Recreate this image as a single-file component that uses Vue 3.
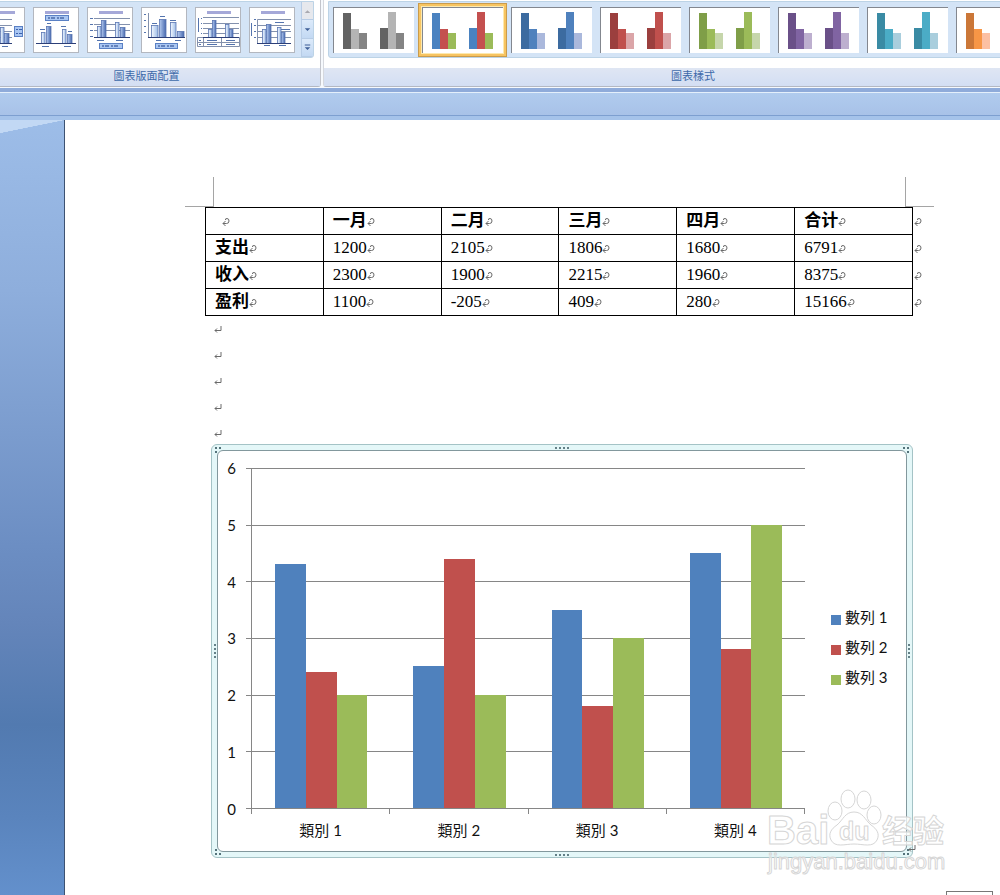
<script setup>
import { ref } from 'vue'

const ticks = [6, 5, 4, 3, 2, 1, 0]
const series = [
  { name: '數列 1', color: '#4f81bd' },
  { name: '數列 2', color: '#c0504d' },
  { name: '數列 3', color: '#9bbb59' },
]
const categories = [
  { name: '類別 1', values: [4.3, 2.4, 2] },
  { name: '類別 2', values: [2.5, 4.4, 2] },
  { name: '類別 3', values: [3.5, 1.8, 3] },
  { name: '類別 4', values: [4.5, 2.8, 5] },
]

const months = ['一月', '二月', '三月', '四月', '合计']
const rows = [
  { name: '支出', cells: ['1200', '2105', '1806', '1680', '6791'] },
  { name: '收入', cells: ['2300', '1900', '2215', '1960', '8375'] },
  { name: '盈利', cells: ['1100', '-205', '409', '280', '15166'] },
]

// end-of-cell mark
const cellMark = 'M3.5 4L1 6.5 3.5 9M1 6.5h3.5q2.5 0 2.5-2.5t-2-2.5-1.5 1.5'

const selected = ref(1)
// fills for the six bars of every chart style
const styles = [
  ['#636363', '#b4b4b4', '#848484', '#636363', '#b4b4b4', '#848484'],
  ['#4a82c0', '#c4504f', '#9bbb59', '#4a82c0', '#c4504f', '#9bbb59'],
  ['#3c6ba0', '#4f81bd', '#aab8dc', '#3c6ba0', '#4f81bd', '#aab8dc'],
  ['#9b3f3e', '#c0504d', '#dba5a8', '#9b3f3e', '#c0504d', '#dba5a8'],
  ['#7f9e48', '#9bbb59', '#c6d6ab', '#7f9e48', '#9bbb59', '#c6d6ab'],
  ['#6a5088', '#8064a2', '#bdafcf', '#6a5088', '#8064a2', '#bdafcf'],
  ['#3a8ba4', '#4bacc6', '#a9cedd', '#3a8ba4', '#4bacc6', '#a9cedd'],
  ['#cb7738', '#f79646', '#fcc0a3', '#cb7738', '#f79646', '#fcc0a3'],
]
const styleBars = [
  [10, 6], [18, 22], [26, 26],
  [47, 21], [55, 5], [63, 26],
]

// bars: [x, y, width, dark], lines: path of the grid, legend: [x, y, w, h]
const layouts = [
  {
    title: true, base: 36, from: 3, to: 33,
    bars: [[6, 24, 4], [10, 18, 5, 1], [21, 20, 4], [25, 26, 5, 1]],
    lines: 'M3 12.5H33M3 18.5H33M3 24.5H33M3 30.5H33',
    marks: 'M7 39.5H14M23 39.5H29', legend: [35, 19, 9, 11],
  },
  {
    title: true, base: 36, from: 3, to: 43,
    bars: [[8, 25, 4], [13, 19, 5, 1], [29, 22, 4], [34, 27, 5, 1]],
    lines: '', marks: 'M9 39.5H16M31 39.5H38M7 22.5H12M14 16.5H18M28 19.5H33M35 24.5H39',
    legend: [12, 8, 24, 6],
  },
  {
    title: true, base: 30, from: 7, to: 43,
    bars: [[10, 19, 4], [14, 13, 5, 1], [28, 15, 4], [33, 20, 5, 1]],
    lines: 'M7 11.5H43M7 17.5H43M7 23.5H43',
    marks: 'M3 11.5H6M3 17.5H6M3 23.5H6M3 29.5H6M10 33.5H17M29 33.5H36', legend: [12, 36, 24, 6],
  },
  {
    title: false, base: 30, from: 7, to: 44,
    bars: [[10, 18, 7], [18, 12, 7, 1], [29, 15, 6], [36, 24, 7, 1]],
    lines: 'M7.5 6V30',
    marks: 'M3 7.5H5M3 13.5H5M3 19.5H5M3 25.5H5M15 33.5H20M34 33.5H40M11 16.5H16M19 9.5H24M29 13.5H35',
    legend: [14, 36, 23, 6],
  },
  {
    title: true, base: 30, from: 8, to: 44,
    bars: [[13, 22, 4], [17, 13, 4, 1], [30, 17, 4], [34, 22, 4, 1]],
    lines: 'M8 10.5H44M8 16.5H44M8 21.5H44M8 26.5H44M2.5 30.5H44.5V39.5H2.5ZM2 35.5H44M8.5 30V39M26.5 30V39',
    marks: 'M3.5 11V25M6 11.5H7M6 16.5H7M6 21.5H7M6 26.5H7M12 33.5H22M31 33.5H40M12 37.5H22M31 37.5H40M4 33.5H6M4 37.5H6',
  },
  {
    title: true, base: 36, from: 8, to: 42,
    bars: [[13, 22, 4], [17, 17, 5, 1], [28, 20, 4], [32, 25, 4, 1]],
    lines: 'M8.5 36V12.5H42M8 18.5H42M8 24.5H42M8 30.5H42',
    marks: 'M2.5 16V29M5 12.5H7M5 18.5H7M5 24.5H7M5 30.5H7M15 38.5H21M30 38.5H37M26 15.5H35M32 22.5H41',
  },
]
</script>

<template>
  <div class="word">
    <header class="ribbon">
      <section class="group layouts-group">
        <div class="gallery layouts">
          <button v-for="(l, i) in layouts" :key="i" class="layout" type="button">
            <svg viewBox="1 1 44 44">
              <defs>
                <linearGradient :id="'light' + i"><stop stop-color="#f4f9ff" /><stop offset="1" stop-color="#9dbbe6" /></linearGradient>
                <linearGradient :id="'dark' + i"><stop stop-color="#b4caef" /><stop offset="1" stop-color="#4668ae" /></linearGradient>
              </defs>
              <rect v-if="l.title" x="12" y="4" width="24" height="3" fill="#a5a8d8" />
              <path :d="l.lines" stroke="#8391ad" fill="none" />
              <rect
                v-for="(b, n) in l.bars"
                :key="n"
                :x="b[0] + 0.5"
                :y="b[1] + 0.5"
                :width="b[2] - 0.5"
                :height="l.base - b[1]"
                :fill="`url(#${b[3] ? 'dark' : 'light'}${i})`"
                stroke="#5a76b2"
                stroke-width="0.8"
              />
              <path :d="`M${l.from} ${l.base + 0.5}H${l.to}`" stroke="#2c3f78" />
              <path :d="l.marks" stroke="#5474ae" />
              <template v-if="l.legend">
                <rect :x="l.legend[0] + 0.5" :y="l.legend[1] + 0.5" :width="l.legend[2] - 1" :height="l.legend[3] - 1" fill="#a9c6f2" stroke="#5a80c4" />
                <path v-if="l.legend[2] > 10" :d="`M${l.legend[0] + 3} ${l.legend[1] + 3}h${l.legend[2] - 6}`" stroke="#1f3f86" stroke-dasharray="2 1 4 2" />
                <path v-else d="M37 22.5h2m1 0h3M37 26.5h2m1 0h3" stroke="#3d62ad" />
              </template>
            </svg>
          </button>
          <div class="scroller">
            <button type="button" disabled aria-label="向上"><svg viewBox="0 0 12 18"><path d="M3 12h6l-3-3z" fill="#a9a9b0" /></svg></button>
            <button type="button" aria-label="向下"><svg viewBox="0 0 12 18"><path d="M3 8h6l-3 3z" fill="#3f5f97" /></svg></button>
            <button type="button" aria-label="其他"><svg viewBox="0 0 12 18"><path d="M3 6h6v1H3zM3 9h6l-3 3z" fill="#3f5f97" /></svg></button>
          </div>
        </div>
        <h2>圖表版面配置</h2>
      </section>
      <section class="group styles-group">
        <div class="gallery styles">
          <button
            v-for="(colors, i) in styles"
            :key="i"
            class="style"
            :class="{ selected: selected === i }"
            type="button"
            @click="selected = i"
          >
            <svg viewBox="1 1 80 45">
              <rect v-for="(b, n) in styleBars" :key="n" :x="b[0]" :y="b[1]" width="8" :height="42 - b[1]" :fill="colors[n]" />
            </svg>
          </button>
        </div>
        <h2>圖表樣式</h2>
      </section>
    </header>

    <div class="band"></div>

    <main class="workspace">
      <aside class="backdrop"></aside>
      <article class="page">
        <div class="crop-marks"><i class="corner-left"></i><i class="corner-right"></i></div>

        <table class="data">
          <thead>
            <tr>
              <th class="blank"><svg class="mark" viewBox="0 0 8 10"><path :d="cellMark" /></svg></th>
              <th v-for="m in months" :key="m">{{ m }}<svg class="mark" viewBox="0 0 8 10"><path :d="cellMark" /></svg></th>
              <td class="row-end"><svg class="mark" viewBox="0 0 8 10"><path :d="cellMark" /></svg></td>
            </tr>
          </thead>
          <tbody>
            <tr v-for="r in rows" :key="r.name">
              <th>{{ r.name }}<svg class="mark" viewBox="0 0 8 10"><path :d="cellMark" /></svg></th>
              <td v-for="(c, i) in r.cells" :key="i">{{ c }}<svg class="mark" viewBox="0 0 8 10"><path :d="cellMark" /></svg></td>
              <td class="row-end"><svg class="mark" viewBox="0 0 8 10"><path :d="cellMark" /></svg></td>
            </tr>
          </tbody>
        </table>

        <p v-for="n in 5" :key="n" class="empty-line">
          <svg class="mark" viewBox="0 0 8 10"><path d="M3 4.5L1 6.5l2 2M1 6.5h6V2" /></svg>
        </p>

        <div class="frame">
          <figure class="chart">
            <div class="y-axis">
              <span v-for="t in ticks" :key="t">{{ t }}</span>
            </div>
            <div class="plot">
              <div class="grid"><i v-for="n in 6" :key="n"></i></div>
              <div class="bars">
                <div v-for="c in categories" :key="c.name" class="cluster">
                  <div
                    v-for="(v, i) in c.values"
                    :key="i"
                    class="bar"
                    :style="{ height: (v / 6) * 100 + '%', background: series[i].color }"
                  ></div>
                </div>
              </div>
            </div>
            <ul class="legend">
              <li v-for="s in series" :key="s.name"><i :style="{ background: s.color }"></i>{{ s.name }}</li>
            </ul>
            <div class="x-axis">
              <span v-for="c in categories" :key="c.name">{{ c.name }}</span>
            </div>
          </figure>

          <i class="grip top"></i>
          <i class="grip bottom"></i>
          <i class="grip left"></i>
          <i class="grip right"></i>
          <i class="corner nw"></i>
          <i class="corner ne"></i>
          <i class="corner sw"></i>
          <i class="corner se"></i>

          <svg class="frame-mark mark" viewBox="0 0 8 10"><path d="M3 4.5L1 6.5l2 2M1 6.5h6V2" /></svg>

          <svg class="watermark" viewBox="0 0 182 88">
            <g fill="#fff" fill-opacity="0.75" stroke="#d6d6d6" stroke-linejoin="round">
              <text x="1" y="56" font-size="40" font-weight="700">Bai</text>
              <path d="M88 24c-9 0-11 8-17 13-6 4-9 9-6 15 4 8 14 4 23 4s19 4 23-4c3-6 0-11-6-15-6-5-8-13-17-13z" />
              <ellipse cx="69" cy="23" rx="7" ry="9" />
              <ellipse cx="82" cy="11" rx="7" ry="9" />
              <ellipse cx="98" cy="12" rx="7" ry="9" />
              <ellipse cx="108" cy="27" rx="7" ry="9" />
              <text x="73" y="52" font-size="25" font-weight="700">du</text>
              <text class="cjk" x="116" y="54" font-size="31" font-weight="700">经验</text>
              <text x="2" y="81" font-size="22">jingyan.baidu.com</text>
            </g>
          </svg>
        </div>

        <div class="page-tip"></div>
      </article>
    </main>
  </div>
</template>

<style>
body {
  overflow: hidden;
}
</style>

<style scoped>
.word {
  display: flex;
  flex-direction: column;
  height: 100vh;
  overflow: hidden;
  background: #fff;
  font-family: "Liberation Sans", "Noto Sans CJK TC", sans-serif;
}
button {
  padding: 0;
  border: 0;
  background: none;
}
svg {
  display: block;
}

/* ribbon */
.ribbon {
  display: flex;
  flex: none;
  gap: 2px;
  height: 87px;
  padding-bottom: 1px;
  overflow: hidden;
  background: #f6f9fd;
}
.group {
  box-sizing: border-box;
  display: flex;
  flex-direction: column;
  padding-top: 1px;
  border-right: 1px solid #c3c5cc;
  border-bottom: 1px solid #b4b8c2;
  border-left: 1px solid #d5d8de;
  border-radius: 0 0 3px 3px;
  background: #fff;
}
.layouts-group {
  flex: 0 0 349px;
  margin-left: -28px;
}
.styles-group {
  flex: 1;
  margin-right: -63px;
}
.group h2 {
  margin: auto 0 0;
  height: 18px;
  background: linear-gradient(#dfe6f3, #d3def3);
  color: #3e6aaa;
  font-size: 11px;
  font-weight: 400;
  line-height: 16px;
  text-align: center;
}
.gallery {
  box-sizing: border-box;
  display: flex;
  gap: 8px;
  height: 57px;
  overflow: hidden;
  border: 1px solid #bcd3e6;
  border-radius: 0 0 3px 3px;
  background: #d4e4f6;
}
.layouts {
  justify-content: flex-end;
  margin-right: 6px;
}
.layout {
  box-sizing: border-box;
  flex: none;
  width: 46px;
  height: 46px;
  margin-top: 5px;
  border: 1px solid #b3b7bf;
  background: #fff;
}
.scroller {
  display: flex;
  flex: none;
  flex-direction: column;
  width: 12px;
  margin-left: -2px;
}
.scroller button {
  flex: 1;
  border-bottom: 1px solid #b7cce6;
  border-left: 1px solid #b7cce6;
  background: linear-gradient(#dceafa, #c3d9f3);
}
.scroller button:disabled {
  background: #e6e8ed;
}
.styles {
  margin-left: 4px;
  padding-left: 4px;
}
.style {
  box-sizing: border-box;
  flex: none;
  width: 81px;
  height: 46px;
  margin-top: 5px;
  border-top: 1px solid #83878f;
  border-left: 1px solid #83878f;
  background: #fff;
}
.style.selected {
  box-shadow: 0 0 0 1px #fce9b0, 0 0 0 3px #f7c461, 0 0 0 4px #c99b4c;
}

.band {
  box-sizing: border-box;
  flex: none;
  height: 32px;
  border-top: 4px solid #8fabda;
  border-bottom: 4px solid #a5c3ea;
  background: linear-gradient(#e4effb 1px, #b0cbee 1px, #a8c2e8 23px, #7d9fd0 23px);
}

/* document */
.workspace {
  display: flex;
  flex: 1;
  min-height: 0;
}
.backdrop {
  box-sizing: border-box;
  flex: 0 0 65px;
  border-right: 1px solid #3d5272;
  background:
    linear-gradient(to bottom right, #c2d8f4 50%, transparent 51%) 0 0 / 100% 13px no-repeat,
    linear-gradient(#9dbde8 0, #8eaedc 22%, #6c8ec3 55%, #6485ba 65%, #527ab0 78%, #5a84bd 90%, #6390cc 100%);
}
.page {
  display: flex;
  flex: 1;
  flex-direction: column;
  min-width: 0;
  padding: 57px 66px 0 120px;
  background: #fff;
}
.crop-marks {
  display: flex;
  flex: none;
  justify-content: space-between;
  height: 30px;
}
.crop-marks i {
  box-sizing: border-box;
  width: 29px;
  border-bottom: 1px solid #a5a5a5;
}
.crop-marks .corner-left {
  border-right: 1px solid #a5a5a5;
}
.crop-marks .corner-right {
  border-left: 1px solid #a5a5a5;
}

.data {
  flex: none;
  width: calc(100% - 20px);
  margin-left: 20px;
  border-collapse: collapse;
  table-layout: fixed;
  font-family: "Liberation Serif", "Noto Sans CJK SC", serif;
  font-size: 17px;
}
.data th,
.data td {
  box-sizing: border-box;
  height: 27px;
  padding: 0 0 0 9px;
  border: 1px solid #000;
  line-height: 24px;
  text-align: left;
  white-space: nowrap;
}
.data .blank {
  padding-left: 16px;
}
.data .row-end {
  width: 21px;
  padding-left: 1px;
  border: 0;
}
.mark {
  display: inline-block;
  width: 8px;
  height: 10px;
  fill: none;
  stroke: #6a6a6a;
  vertical-align: -1px;
}
.empty-line {
  display: flex;
  flex: none;
  align-items: center;
  height: 26px;
  margin: 0 0 0 29px;
}

/* chart */
.frame {
  position: relative;
  flex: none;
  margin: -2px 21px 0 26px;
  padding: 5px;
  border: 1px solid #a4c3c6;
  border-radius: 6px;
  background: #e4f7f8;
}
.chart {
  display: grid;
  grid-template-columns: 22px minmax(0, 1fr) 75px;
  grid-template-rows: 361px auto;
  column-gap: 11px;
  margin: 0;
  padding: 7px 0 11px;
  border: 1px solid #82989d;
  border-radius: 6px;
  background: #fff;
  color: #111;
  font-family: Lato, "Noto Sans CJK TC", sans-serif;
  font-size: 15px;
  line-height: 20px;
}
.y-axis {
  display: flex;
  flex-direction: column;
  justify-content: space-between;
  padding-right: 4px;
  text-align: right;
}
.plot {
  display: grid;
  margin: 10px 15px 10px 0;
}
.grid,
.bars {
  display: flex;
  grid-area: 1 / 1;
}
.grid {
  flex-direction: column;
  margin-left: -5px;
  border-bottom: 1px solid #868686;
}
.grid i {
  flex: 1;
  border-top: 1px solid #868686;
}
.bars {
  margin-bottom: 1px;
  border-left: 1px solid #868686;
}
.cluster {
  display: flex;
  flex: 1;
  align-items: flex-end;
  padding: 0 23px;
}
.bar {
  flex: 1;
}
.x-axis {
  display: flex;
  grid-column: 2;
  margin: -10px 15px 0 0;
  border-left: 1px solid;
  border-image: linear-gradient(#868686 6px, transparent 6px) 1;
}
.x-axis span {
  flex: 1;
  padding-top: 11px;
  border-right: 1px solid;
  border-image: linear-gradient(#868686 6px, transparent 6px) 1;
  text-align: center;
}
.legend {
  display: flex;
  flex-direction: column;
  gap: 10px;
  margin: 149px 0 0;
  padding: 0;
  list-style: none;
}
.legend li {
  display: flex;
  gap: 4px;
  white-space: nowrap;
}
.legend i {
  width: 10px;
  height: 10px;
  margin-top: 8px;
}

.grip,
.corner {
  position: absolute;
}
.grip.top,
.grip.bottom {
  left: calc(50% - 7px);
  width: 15px;
  height: 2px;
  background: repeating-linear-gradient(90deg, #648087 0 2px, transparent 2px 4px);
}
.grip.top {
  top: 2px;
}
.grip.bottom {
  bottom: 1px;
}
.grip.left,
.grip.right {
  top: calc(50% - 7px);
  width: 2px;
  height: 15px;
  background: repeating-linear-gradient(#648087 0 2px, transparent 2px 4px);
}
.grip.left {
  left: 2px;
}
.grip.right {
  right: 2px;
}
.corner {
  width: 2px;
  height: 2px;
  background: #54727a;
}
.nw {
  top: 2px;
  left: 3px;
  box-shadow: 4px 0 #54727a, 0 4px #54727a;
}
.ne {
  top: 2px;
  right: 3px;
  box-shadow: -4px 0 #54727a, 0 4px #54727a;
}
.sw {
  bottom: 2px;
  left: 3px;
  box-shadow: 4px 0 #54727a, 0 -4px #54727a;
}
.se {
  right: 3px;
  bottom: 2px;
  box-shadow: -4px 0 #54727a, 0 -4px #54727a;
}
.frame-mark {
  position: absolute;
  right: -4px;
  bottom: 4px;
}
.watermark {
  position: absolute;
  right: -36px;
  bottom: -19px;
  width: 182px;
  height: 88px;
  overflow: visible;
  font-family: "Liberation Sans", sans-serif;
}
.watermark .cjk {
  font-family: "Noto Sans CJK SC", sans-serif;
}
.page-tip {
  box-sizing: border-box;
  flex: none;
  width: 47px;
  height: 4px;
  margin: auto -59px 0 auto;
  border: 1px solid #777;
  border-bottom: 0;
}
</style>
